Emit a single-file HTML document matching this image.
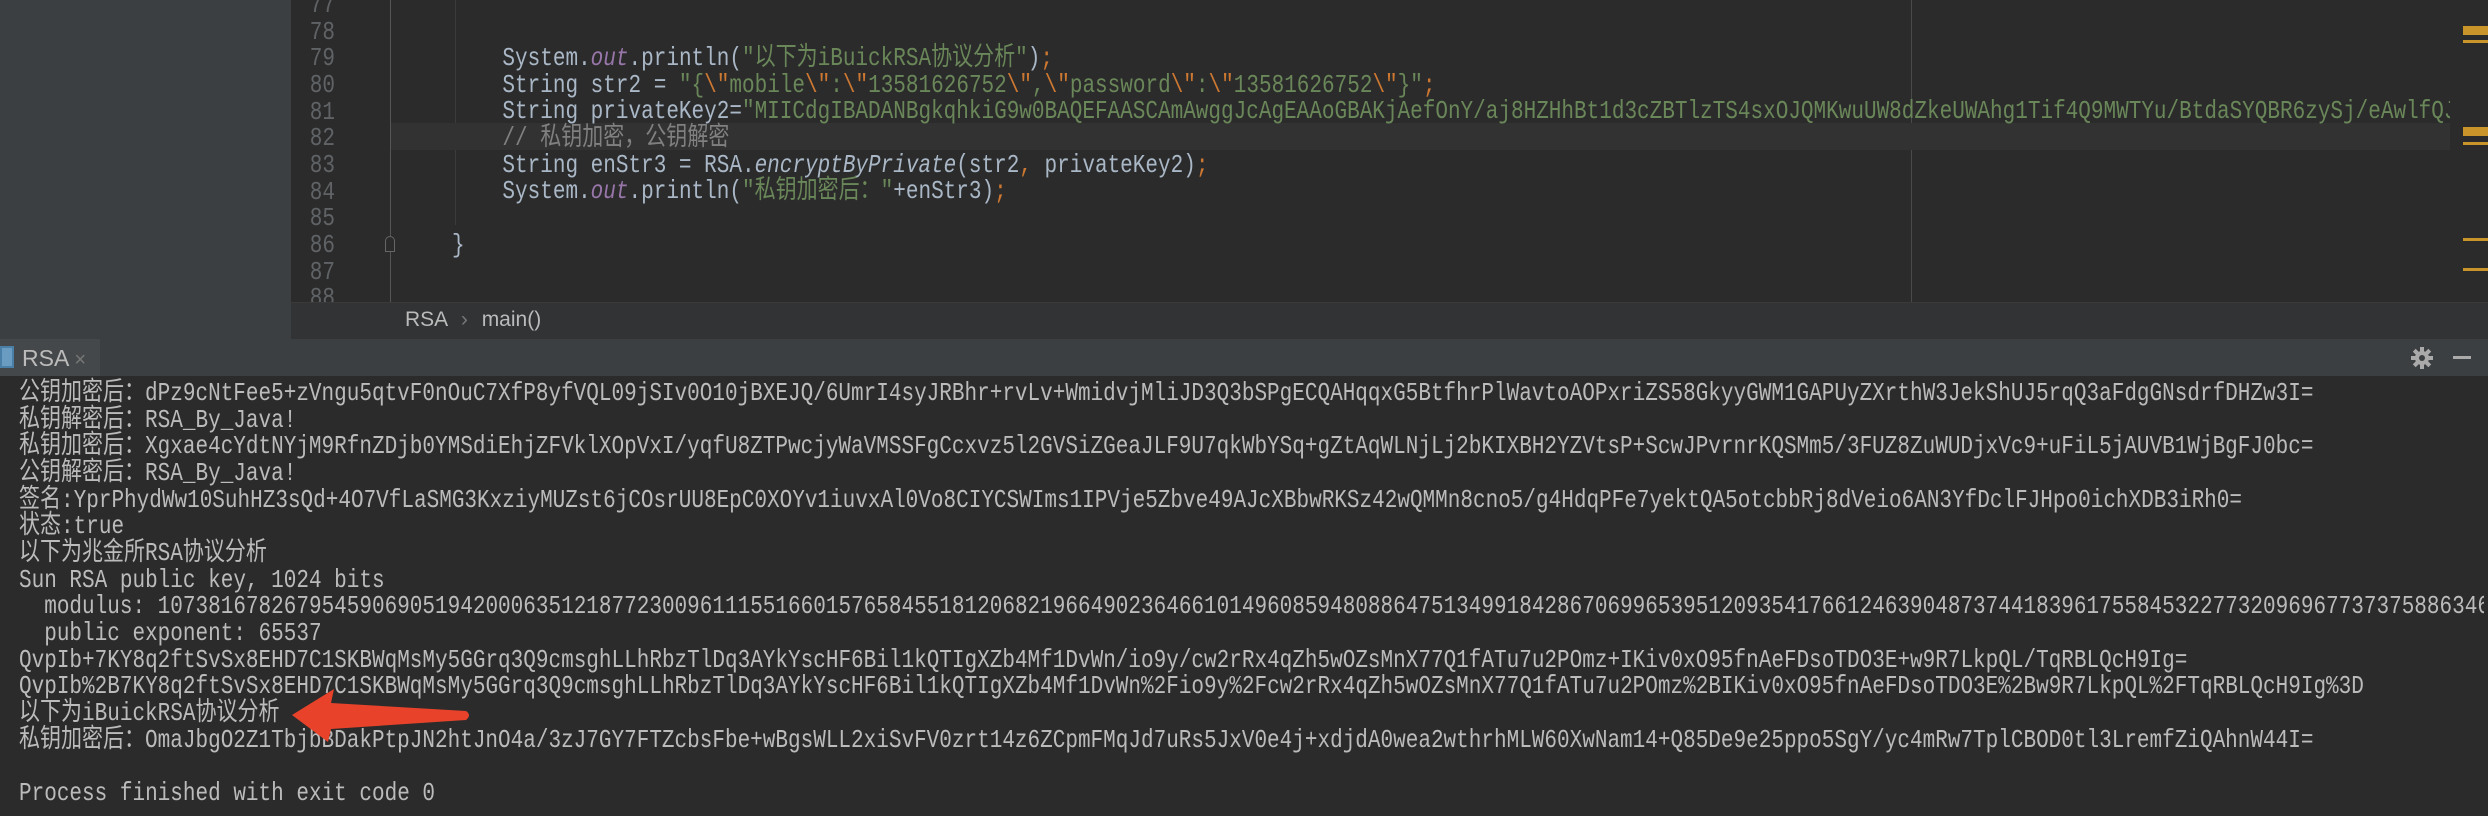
<!DOCTYPE html>
<html><head><meta charset="utf-8"><style>
*{margin:0;padding:0;box-sizing:border-box}
body{width:2488px;height:816px;overflow:hidden;background:#2b2b2b;position:relative;font-family:"Liberation Mono","Noto Sans CJK SC",monospace}
.abs{position:absolute}
.mono{font-size:26px;line-height:26.67px;white-space:pre;transform:scaleX(.808);transform-origin:0 0}
.code{color:#a9b7c6}
.s{color:#6a8759}.k{color:#cc7832}.o{color:#9876aa;font-style:italic}.c{color:#808080}.i{font-style:italic}
.ln{color:#606366;font-size:26px;line-height:26.67px;text-align:right;width:60px;transform:scaleX(.808);transform-origin:100% 0}
.con{color:#bbbbbb}
.mk{position:absolute;left:2463px;width:25px;background:#c9952b}
</style></head><body>
<div class="abs" style="left:0;top:0;width:291px;height:339px;background:#3c3f41"></div>
<div class="abs" style="left:390px;top:0;width:1px;height:302px;background:#555"></div>
<div class="abs" style="left:455px;top:0;width:1px;height:225px;background:#3b3b3b"></div>
<div class="abs" style="left:1911px;top:0;width:1px;height:302px;background:#4a4a4a"></div>
<div class="abs" style="left:391px;top:123px;width:2097px;height:27px;background:#323232"></div>
<div class="abs ln" style="left:275px;top:-8px">77
78
79
80
81
82
83
84
85
86
87
88</div>
<div class="abs" style="left:385px;top:236px;width:10px;height:16px;border:1px solid #666;border-radius:5px 5px 0 0;background:#2b2b2b"></div>
<div class="abs mono code" style="left:452px;top:45px;width:2600px;overflow:visible">    System.<span class="o">out</span>.println(<span class="s">"以下为iBuickRSA协议分析"</span>)<span class="k">;</span>
    String str2 = <span class="s">"{</span><span class="k">\"</span><span class="s">mobile</span><span class="k">\"</span><span class="s">:</span><span class="k">\"</span><span class="s">13581626752</span><span class="k">\"</span><span class="s">,</span><span class="k">\"</span><span class="s">password</span><span class="k">\"</span><span class="s">:</span><span class="k">\"</span><span class="s">13581626752</span><span class="k">\"</span><span class="s">}"</span><span class="k">;</span>
    String privateKey2=<span class="s">"MIICdgIBADANBgkqhkiG9w0BAQEFAASCAmAwggJcAgEAAoGBAKjAefOnY/aj8HZHhBt1d3cZBTlzTS4sxOJQMKwuUW8dZkeUWAhg1Tif4Q9MWTYu/BtdaSYQBR6zySj/eAwlfQJsEY</span>
    <span class="c">// 私钥加密，公钥解密</span>
    String enStr3 = RSA.<span class="i">encryptByPrivate</span>(str2<span class="k">,</span> privateKey2)<span class="k">;</span>
    System.<span class="o">out</span>.println(<span class="s">"私钥加密后："</span>+enStr3)<span class="k">;</span>

}</div>
<div class="abs" style="left:2450px;top:0;width:38px;height:302px;background:#2b2b2b"></div>
<div class="mk" style="top:26px;height:9px"></div><div class="mk" style="top:40px;height:3px"></div>
<div class="mk" style="top:127px;height:9px"></div><div class="mk" style="top:142px;height:3px"></div>
<div class="mk" style="top:238px;height:3px"></div><div class="mk" style="top:268px;height:3px"></div>
<div class="abs" style="left:291px;top:302px;width:2197px;height:37px;background:#313335;border-top:1px solid #3a3a3a"></div>
<div class="abs" style="left:405px;top:308px;font:21px 'Liberation Sans',sans-serif;color:#bbb">RSA <span style="color:#777;margin:0 8px">›</span> main()</div>
<div class="abs" style="left:0;top:339px;width:2488px;height:37px;background:#3c3f41"></div>
<div class="abs" style="left:0;top:339px;width:100px;height:37px;background:#45484a"></div>
<div class="abs" style="left:0;top:346px;width:14px;height:22px;border:2px solid #4a7fa8;background:#6a9bc0"></div>
<div class="abs" style="left:22px;top:345px;font:23px 'Liberation Sans',sans-serif;color:#bbb">RSA <span style="color:#777;font-size:20px">×</span></div>
<svg class="abs" style="left:2410px;top:346px" width="24" height="24" viewBox="0 0 24 24"><g fill="#aaa"><circle cx="12" cy="12" r="7"/><rect x="10" y="1" width="4" height="22"/><rect x="1" y="10" width="22" height="4"/><rect x="10" y="1" width="4" height="22" transform="rotate(45 12 12)"/><rect x="10" y="1" width="4" height="22" transform="rotate(-45 12 12)"/></g><circle cx="12" cy="12" r="3" fill="#3c3f41"/></svg>
<div class="abs" style="left:2453px;top:356px;width:18px;height:3px;background:#aaa"></div>
<div class="abs mono con" style="left:19px;top:380px">公钥加密后：dPz9cNtFee5+zVngu5qtvF0nOuC7XfP8yfVQL09jSIv0O10jBXEJQ/6UmrI4syJRBhr+rvLv+WmidvjMliJD3Q3bSPgECQAHqqxG5BtfhrPlWavtoAOPxriZS58GkyyGWM1GAPUyZXrthW3JekShUJ5rqQ3aFdgGNsdrfDHZw3I=
私钥解密后：RSA_By_Java!
私钥加密后：Xgxae4cYdtNYjM9RfnZDjb0YMSdiEhjZFVklXOpVxI/yqfU8ZTPwcjyWaVMSSFgCcxvz5l2GVSiZGeaJLF9U7qkWbYSq+gZtAqWLNjLj2bKIXBH2YZVtsP+ScwJPvrnrKQSMm5/3FUZ8ZuWUDjxVc9+uFiL5jAUVB1WjBgFJ0bc=
公钥解密后：RSA_By_Java!
签名:YprPhydWw10SuhHZ3sQd+4O7VfLaSMG3KxziyMUZst6jCOsrUU8EpC0XOYv1iuvxAl0Vo8CIYCSWIms1IPVje5Zbve49AJcXBbwRKSz42wQMMn8cno5/g4HdqPFe7yektQA5otcbbRj8dVeio6AN3YfDclFJHpo0ichXDB3iRh0=
状态:true
以下为兆金所RSA协议分析
Sun RSA public key, 1024 bits
  modulus: 107381678267954590690519420006351218772300961115516601576584551812068219664902364661014960859480886475134991842867069965395120935417661246390487374418396175584532277320969677373758863460
  public exponent: 65537
QvpIb+7KY8q2ftSvSx8EHD7C1SKBWqMsMy5GGrq3Q9cmsghLLhRbzTlDq3AYkYscHF6Bil1kQTIgXZb4Mf1DvWn/io9y/cw2rRx4qZh5wOZsMnX77Q1fATu7u2POmz+IKiv0xO95fnAeFDsoTDO3E+w9R7LkpQL/TqRBLQcH9Ig=
QvpIb%2B7KY8q2ftSvSx8EHD7C1SKBWqMsMy5GGrq3Q9cmsghLLhRbzTlDq3AYkYscHF6Bil1kQTIgXZb4Mf1DvWn%2Fio9y%2Fcw2rRx4qZh5wOZsMnX77Q1fATu7u2POmz%2BIKiv0xO95fnAeFDsoTDO3E%2Bw9R7LkpQL%2FTqRBLQcH9Ig%3D
以下为iBuickRSA协议分析
私钥加密后：OmaJbgO2Z1TbjbBDakPtpJN2htJnO4a/3zJ7GY7FTZcbsFbe+wBgsWLL2xiSvFV0zrt14z6ZCpmFMqJd7uRs5JxV0e4j+xdjdA0wea2wthrhMLW60XwNam14+Q85De9e25ppo5SgY/yc4mRw7TplCBOD0tl3LremfZiQAhnW44I=

Process finished with exit code 0</div>
<div class="abs" style="left:2484px;top:376px;width:4px;height:440px;background:#2b2b2b"></div>
<svg class="abs" style="left:0;top:0" width="2488" height="816"><path d="M292 715 L334 689 L331 703 L466 711 Q472 715 466 720 L331 729 L328 742 Z" fill="#e8432a"/></svg>
</body></html>
